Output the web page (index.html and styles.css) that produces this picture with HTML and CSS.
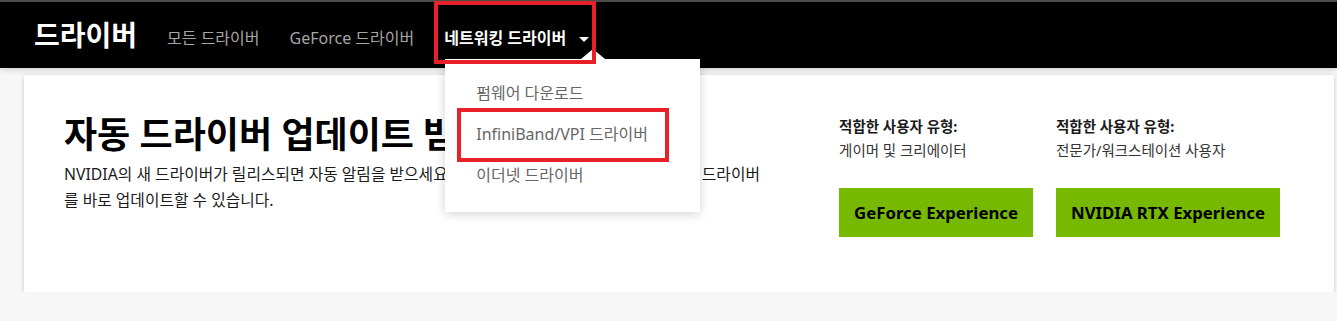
FILE: index.html
```html
<!DOCTYPE html>
<html lang="ko">
<head>
    <meta charset="utf-8">
    <link rel="stylesheet" href="styles.css">
</head>
<body>

<header class="topbar">
    <nav class="nav">
        <a class="brand" href="#">드라이버</a>
        <a class="nav-link" href="#">모든 드라이버</a>
        <a class="nav-link" href="#">GeForce 드라이버</a>
        <div class="nav-item">
            <a class="nav-link active" href="#">네트워킹 드라이버<span class="caret"></span></a>
            <div class="menu">
                <a href="#">펌웨어 다운로드</a>
                <a href="#">InfiniBand/VPI 드라이버</a>
                <a href="#">이더넷 드라이버</a>
            </div>
        </div>
    </nav>
</header>

<main class="page">
    <section class="card">
        <div class="intro">
            <h1>자동 드라이버 업데이트 받기</h1>
            <p>NVIDIA의 새 드라이버가 릴리스되면 자동 알림을 받으세요. 클릭 한 번으로 최신 GeForce Game 드라이버를 바로 업데이트할 수 있습니다.</p>
        </div>
        <div class="apps">
            <div class="app">
                <h3>적합한 사용자 유형:</h3>
                <p>게이머 및 크리에이터</p>
                <a class="btn" href="#">GeForce Experience</a>
            </div>
            <div class="app">
                <h3>적합한 사용자 유형:</h3>
                <p>전문가/워크스테이션 사용자</p>
                <a class="btn" href="#">NVIDIA RTX Experience</a>
            </div>
        </div>
    </section>
</main>

<!-- review marks -->
<div class="mark mark-nav"></div>
<div class="mark mark-item"></div>

</body>
</html>
```

FILE: styles.css
```css
body {
    margin: 0;
    background: #f7f7f7;
    font-family: "Noto Sans", "Noto Sans CJK KR", sans-serif;
    color: #1a1a1a;
}

a {
    text-decoration: none;
}

.topbar {
    border-top: 2px solid #4d4d4d;
    background: #000;
    box-shadow: 0 2px 6px rgba(0, 0, 0, 0.15);
    position: relative;
    z-index: 2;
}

.nav {
    display: flex;
    height: 66px;
    padding-left: 34px;
}

.brand {
    color: #fff;
    font-size: 28px;
    font-weight: 700;
    line-height: 66px;
    padding-bottom: 6px;
    margin-right: 30px;
}

.nav-link {
    color: #a6a6a6;
    font-size: 16px;
    line-height: 66px;
    padding-top: 6px;
    margin-right: 30px;
    display: flex;
    align-items: center;
}

.nav-link.active {
    color: #fff;
    font-weight: 700;
}

.caret {
    width: 0;
    height: 0;
    border-left: 5px solid transparent;
    border-right: 5px solid transparent;
    border-top: 5px solid #fff;
    margin-left: 13px;
    margin-top: 2px;
}

.nav-item {
    position: relative;
    display: flex;
}

.menu {
    position: absolute;
    left: 1px;
    top: 57px;
    width: 255px;
    padding: 14px 0 16px;
    background: #fff;
    box-shadow: 0 2px 10px rgba(0, 0, 0, 0.18);
}

.menu::before {
    content: "";
    position: absolute;
    left: 136px;
    top: -10px;
    border-left: 12px solid transparent;
    border-right: 12px solid transparent;
    border-bottom: 10px solid #fff;
}

.menu a {
    display: block;
    padding-left: 31px;
    font-size: 16px;
    line-height: 41px;
    color: #666;
}

.page {
    padding: 7px 3px 0 24px;
}

.card {
    display: flex;
    background: #fff;
    border-radius: 2px;
    box-shadow: 0 1px 4px rgba(0, 0, 0, 0.2);
    padding: 38px 54px 55px 40px;
}

.intro {
    flex: 1;
}

.intro h1 {
    margin: 0;
    font-size: 36px;
    line-height: 44px;
    font-weight: 700;
    color: #000;
}

.intro p {
    margin: 4px 0 0;
    max-width: 708px;
    font-size: 15.8px;
    line-height: 26px;
    color: #1a1a1a;
}

.apps {
    display: flex;
    gap: 23px;
    margin-top: 1px;
}

.app h3 {
    margin: 0;
    font-size: 14.5px;
    line-height: 24px;
    font-weight: 700;
}

.app p {
    margin: 0;
    font-size: 14.5px;
    line-height: 24px;
    color: #333;
}

.btn {
    display: inline-block;
    margin-top: 26px;
    padding: 0 15px;
    line-height: 49px;
    background: #76b900;
    color: #000;
    font-size: 16.8px;
    font-weight: 700;
}

.mark {
    position: absolute;
    border: 4px solid #e8202a;
    box-sizing: border-box;
    z-index: 5;
}

.mark-nav {
    left: 434px;
    top: 1px;
    width: 162px;
    height: 63px;
}

.mark-item {
    left: 457px;
    top: 108px;
    width: 212px;
    height: 54px;
}
```
